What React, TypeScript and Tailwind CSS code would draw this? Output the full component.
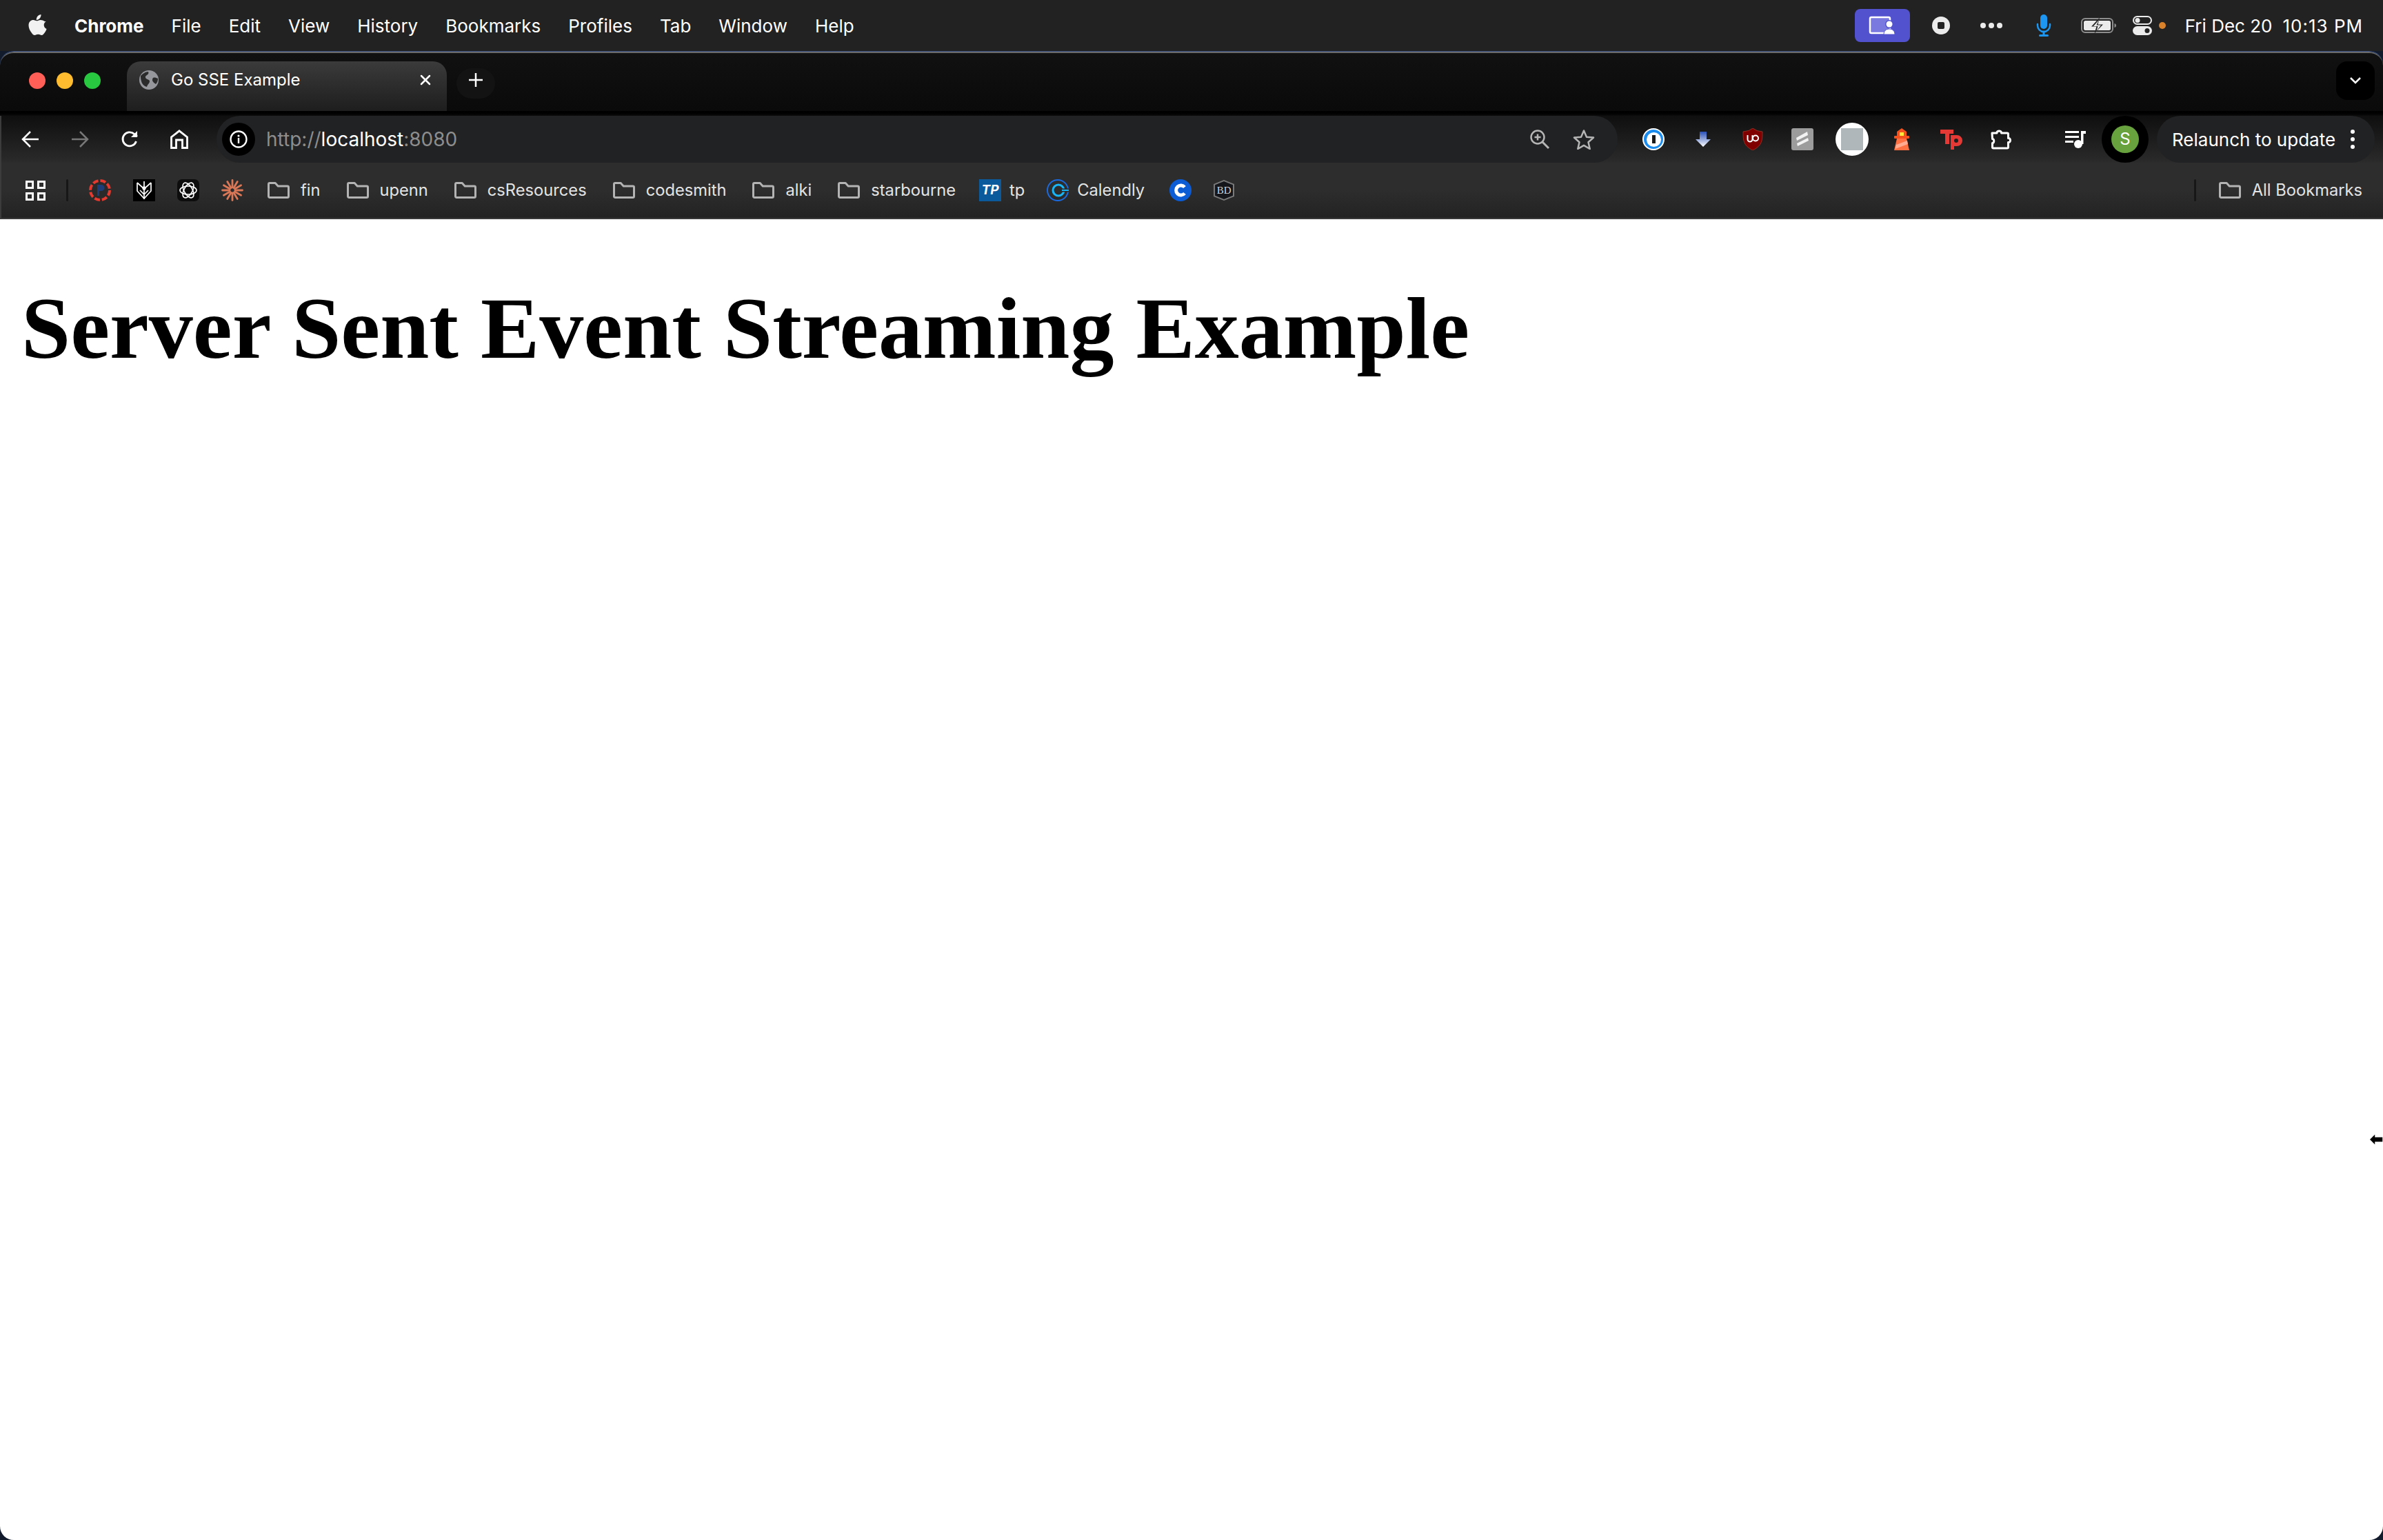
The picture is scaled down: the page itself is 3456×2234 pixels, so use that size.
const MENU_ITEMS = ["File", "Edit", "View", "History", "Bookmarks", "Profiles", "Tab", "Window", "Help"];
const BURST_ANGLES = [0, 30, 60, 90, 120, 150, 180, 210, 240, 270, 300, 330];

function Folder() {
  return (
    <svg width="32" height="24" viewBox="0 0 32 24" fill="none" className="shrink-0">
      <path d="M1.500 3C1.500 2 2.300 1.500 3.200 1.500h8l4 4.500h13.600c1 0 1.700.7 1.700 1.700v13c0 1-.7 1.800-1.700 1.800H3.200c-1 0-1.700-.8-1.700-1.800z" stroke="#b3b3b3" strokeWidth="3" strokeLinejoin="round" />
    </svg>
  );
}

function FolderMark({ label, className }: { label: string; className: string }) {
  return (
    <div className={`flex items-center gap-[16px] ${className}`}>
      <Folder />
      <span>{label}</span>
    </div>
  );
}

function MenuBar() {
  return (
    <div className="flex h-[74px] shrink-0 items-center bg-[#222222] pl-[40px] pr-[29px] text-[26px] text-white">
      <svg width="28" height="32" viewBox="0 0 28 32" fill="#f2f2f2" className="mb-[3px] shrink-0">
        <path d="M19.500 1c.2 2.300-.7 4.200-1.800 5.500-1.200 1.500-3.100 2.500-4.900 2.400-.3-2.100.7-4.200 1.800-5.500C15.800 2 17.900 1 19.500 1z" />
        <path d="M26.800 11.100c-1.900 1.200-3.100 3-3.100 5.200 0 2.600 1.500 4.700 3.900 5.700-.6 1.900-1.500 3.600-2.700 5.300-1.300 1.800-2.500 3.700-4.600 3.700-2 0-2.600-1.200-5-1.200-2.300 0-3.100 1.200-5 1.200s-3.300-1.700-4.700-3.800C3.400 24.700 1.500 20.400 1.500 16.700 1.500 11.600 5 9 8.300 9c2 0 3.700 1.300 5 1.300 1.200 0 3.100-1.400 5.400-1.400 2.300 0 4.500.9 6.100 2.200z" />
      </svg>
      <span className="ml-[40px] font-bold">Chrome</span>
      <div className="ml-[40px] flex gap-[40px]">
        {MENU_ITEMS.map((m) => (
          <span key={m}>{m}</span>
        ))}
      </div>
      <div className="ml-auto flex h-[48px] w-[80px] items-center justify-center rounded-[8px] bg-[#5251ce]">
        <svg width="40" height="28" viewBox="0 0 40 28">
          <rect x="2" y="2" width="29" height="23" rx="2" fill="#7a79e0" stroke="#ffffff" strokeWidth="2.500" />
          <circle cx="30" cy="12" r="6" fill="#5251ce" />
          <circle cx="30" cy="12" r="4.500" fill="#ffffff" />
          <path d="M22 27c0-5 3-8 8-8s8 3 8 8z" fill="#ffffff" stroke="#5251ce" strokeWidth="1" />
        </svg>
      </div>
      <div className="ml-[32px] flex size-[26px] items-center justify-center rounded-full bg-[#ebebeb]">
        <div className="size-[10px] rounded-[2px] bg-[#222222]" />
      </div>
      <div className="ml-[44px] flex w-[32px] justify-between">
        <div className="size-[8px] rounded-full bg-[#ebebeb]" />
        <div className="size-[8px] rounded-full bg-[#ebebeb]" />
        <div className="size-[8px] rounded-full bg-[#ebebeb]" />
      </div>
      <svg width="22" height="32" viewBox="0 0 22 32" className="ml-[49px]">
        <rect x="6" y="0" width="10" height="21" rx="5" fill="#1c96f0" />
        <path d="M2 14v2a9 9 0 0 0 18 0v-2" fill="none" stroke="#1c96f0" strokeWidth="2.500" strokeLinecap="round" />
        <path d="M11 25v4M5.500 30.500h11" stroke="#1c96f0" strokeWidth="3" strokeLinecap="round" />
      </svg>
      <svg width="52" height="24" viewBox="0 0 52 24" className="ml-[43px]">
        <rect x="1" y="2" width="45" height="20" rx="5" fill="none" stroke="#8e8e8e" strokeWidth="2" />
        <rect x="4" y="5" width="39" height="14" rx="2.500" fill="#ebebeb" />
        <path d="M48.500 9c2 .6 2.500 1.500 2.500 3s-.5 2.400-2.500 3z" fill="#8e8e8e" />
        <path d="M27 0.500 15 13.500h7.500L19.500 23.500 32 10.500h-7.500z" fill="#222222" />
        <path d="M26 4 18 13h6.500l-2 7L29 11.500h-6.500z" fill="#ebebeb" />
      </svg>
      <svg width="28" height="28" viewBox="0 0 28 28" className="ml-[23px]">
        <rect x="1" y="1" width="26" height="11" rx="5.500" fill="none" stroke="#ebebeb" strokeWidth="2" />
        <circle cx="7" cy="6.500" r="3.500" fill="#ebebeb" />
        <rect x="0" y="15" width="28" height="13" rx="6.500" fill="#ebebeb" />
        <circle cx="21" cy="21.500" r="3.500" fill="#222222" />
      </svg>
      <div className="ml-[10px] size-[10px] rounded-full bg-[#d9822b]" />
      <span className="ml-[28px] whitespace-pre">Fri Dec 20</span>
      <span className="ml-[15px] whitespace-pre tracking-[1px]">10:13 PM</span>
    </div>
  );
}

function TabStrip() {
  return (
    <div className="relative flex h-[86px] shrink-0 items-start rounded-t-[20px] border-t-2 border-[#6a6a6a] bg-gradient-to-b from-[#111111] to-[#0a0a0a] pl-[42px] pt-[12px]">
      <div className="mt-[16px] flex gap-[16px]">
        <div className="size-[24px] rounded-full bg-[#ff5f57]" />
        <div className="size-[24px] rounded-full bg-[#febc2e]" />
        <div className="size-[24px] rounded-full bg-[#28c840]" />
      </div>
      <div className="ml-[38px] flex h-[72px] w-[464px] items-start rounded-t-[20px] bg-gradient-to-b from-[#3b3b3b] to-[#1e1e1e] pl-[18px] pr-[22px] pt-[13px] text-[24px] leading-[28px] text-white">
        <svg width="28" height="28" viewBox="0 0 28 28" className="shrink-0">
          <circle cx="14" cy="14" r="14" fill="#95979c" />
          <path d="M2 8c3-3 7-6 11-6 1 2 0 4-2 5s-3 3-1 5 5 1 5 4-3 4-4 8c-4-1-7-4-8-8-1-3-1-6-1-8z" fill="#2b2b2b" />
          <path d="M20 11c2-1 5 0 7 1 0 3-1 6-3 8-2-1-4-3-5-5 0-2 0-3 1-4z" fill="#2b2b2b" />
        </svg>
        <span className="ml-[18px]">Go SSE Example</span>
        <svg width="18" height="18" viewBox="0 0 18 18" className="ml-auto mt-[5px]">
          <path d="M3 3l12 12M15 3 3 15" stroke="#ffffff" strokeWidth="2.500" strokeLinecap="round" />
        </svg>
      </div>
      <div className="ml-[14px] mt-[10px] flex h-[44px] w-[56px] items-start justify-center rounded-[22px] bg-[#131313] pt-[6px]">
        <svg width="22" height="22" viewBox="0 0 22 22">
          <path d="M11 1v20M1 11h20" stroke="#ffffff" strokeWidth="2.500" />
        </svg>
      </div>
      <div className="ml-auto mr-[12px] flex h-[56px] w-[56px] items-center justify-center rounded-[16px] bg-black">
        <svg width="20" height="14" viewBox="0 0 20 14">
          <path d="M3 3l7 7 7-7" fill="none" stroke="#ffffff" strokeWidth="2.500" />
        </svg>
      </div>
    </div>
  );
}

function NavIcon({ children }: { children: React.ReactNode }) {
  return <div className="flex h-[68px] w-[72px] shrink-0 items-center justify-center">{children}</div>;
}

function Toolbar() {
  return (
    <div className="flex h-[68px] shrink-0 items-center bg-gradient-to-b from-[#0f0f0f] to-[#2b2b2b] pl-[8px] pr-[12px] shadow-[inset_2px_0_0_#3c3c3c]">
      <NavIcon>
        <svg width="26" height="26" viewBox="0 0 26 26" fill="none" stroke="#ffffff" strokeWidth="2.500">
          <path d="M25 13H3M13 2 2 13l11 11" />
        </svg>
      </NavIcon>
      <NavIcon>
        <svg width="26" height="26" viewBox="0 0 26 26" fill="none" stroke="#777777" strokeWidth="2.500">
          <path d="M1 13h22M13 2l11 11-11 11" />
        </svg>
      </NavIcon>
      <NavIcon>
        <svg width="26" height="26" viewBox="0 0 26 26" fill="none" stroke="#ffffff" strokeWidth="2.800">
          <path d="M22.500 16a10 10 0 1 1-2.800-10.600L24 9" />
          <path d="M24 1v9h-9" strokeWidth="0" fill="#ffffff" />
        </svg>
      </NavIcon>
      <NavIcon>
        <svg width="26" height="28" viewBox="0 0 26 28" fill="none" stroke="#ffffff" strokeWidth="2.800">
          <path d="M1.500 26.500V11L13 1.800 24.500 11v15.500h-7V15h-9v11.500z" />
        </svg>
      </NavIcon>
      <div className="ml-[18px] flex h-[68px] w-[2032px] shrink-0 items-center rounded-full bg-[#212224] pl-[8px] pr-[33px] text-[28px]">
        <div className="flex size-[48px] items-center justify-center rounded-full bg-black">
          <svg width="26" height="26" viewBox="0 0 26 26">
            <circle cx="13" cy="13" r="11.500" fill="none" stroke="#ffffff" strokeWidth="2.300" />
            <circle cx="13" cy="8" r="1.600" fill="#ffffff" />
            <rect x="11.800" y="11" width="2.400" height="8" fill="#ffffff" />
          </svg>
        </div>
        <span className="ml-[16px]">
          <span className="text-[#8d8d8d]">http://</span>
          <span className="text-white">localhost</span>
          <span className="text-[#8d8d8d]">:8080</span>
        </span>
        <svg width="30" height="30" viewBox="0 0 30 30" fill="none" stroke="#b5b5b5" strokeWidth="2.500" className="ml-auto">
          <circle cx="12" cy="12" r="9.500" />
          <path d="M19 19l9 9" strokeWidth="3" />
          <path d="M12 7.500v9M7.500 12h9" />
        </svg>
        <svg width="32" height="30" viewBox="0 0 32 30" fill="none" stroke="#b5b5b5" strokeWidth="2.500" className="ml-[33px]">
          <path d="M16 2.500l4 9.200 10 .9-7.500 6.600 2.200 9.800L16 23.900 7.300 29l2.200-9.800L2 12.600l10-.9z" strokeLinejoin="round" />
        </svg>
      </div>
      <div className="ml-[16px] flex items-center">
        <NavIcon>
          <div className="flex size-[32px] items-center justify-center rounded-full border-[2px] border-white bg-[#1a8cf0]">
            <div className="flex size-[21px] items-center justify-center rounded-full bg-white">
              <div className="h-[12px] w-[5px] bg-[#1a1a1a]" />
            </div>
          </div>
        </NavIcon>
        <NavIcon>
          <svg width="22" height="24" viewBox="0 0 22 24">
            <defs>
              <linearGradient id="dlArrow" x1="0" y1="0" x2="0" y2="1">
                <stop offset="0" stopColor="#2a50b8" />
                <stop offset="1" stopColor="#ffffff" />
              </linearGradient>
            </defs>
            <path d="M6 1h10v11h6L11 23 0 12h6z" fill="url(#dlArrow)" />
          </svg>
        </NavIcon>
        <NavIcon>
          <svg width="30" height="32" viewBox="0 0 30 32">
            <path d="M15 0l6 3.500 8 1.500c0 12 0 20-14 27C1 25 1 17 1 5l8-1.500z" fill="#800000" stroke="#a33a2a" strokeWidth="0.800" />
            <path d="M7.500 10v6a3.500 3.500 0 0 0 7 0v-6" fill="none" stroke="#ffffff" strokeWidth="2" />
            <circle cx="19" cy="14.500" r="4" fill="none" stroke="#ffffff" strokeWidth="2" />
          </svg>
        </NavIcon>
        <NavIcon>
          <div className="flex size-[32px] items-center justify-center rounded-[3px] bg-[#9c9c9c]">
            <svg width="20" height="22" viewBox="0 0 20 22" fill="#f2f2f2">
              <path d="M1 10 17 1l1 5L2 14z" transform="translate(0 -1)" />
              <path d="M2 17 18 9l1 4L3 21z" />
            </svg>
          </div>
        </NavIcon>
        <NavIcon>
          <div className="flex size-[48px] items-center justify-center rounded-full bg-white">
            <div className="size-[32px] bg-[#b0b7ba]" />
          </div>
        </NavIcon>
        <NavIcon>
          <svg width="24" height="32" viewBox="0 0 24 32">
            <path d="M12 0l7 5v8H5V5z" fill="#f4511e" />
            <rect x="9" y="6" width="6" height="6" fill="#ffeb3b" />
            <rect x="1" y="11" width="22" height="4" rx="1" fill="#f4511e" />
            <path d="M5 15h14l4 17H1z" fill="#ff7043" />
            <path d="M4 24l16-6 1 5L2.500 30z" fill="#ffab91" />
          </svg>
        </NavIcon>
        <NavIcon>
          <svg width="32" height="30" viewBox="0 0 32 30" fill="#e53935">
            <path d="M0 1h19v6h-6v15H7V7H0z" />
            <path d="M15 9h9a8 8 0 0 1 0 16h-4v5h-5z" />
            <circle cx="23" cy="17" r="3" fill="#1f1f1f" />
          </svg>
        </NavIcon>
        <NavIcon>
          <svg width="32" height="32" viewBox="0 0 32 32" fill="none" stroke="#ffffff" strokeWidth="3" strokeLinejoin="round">
            <path d="M3 7h7c-.5-4 7-4 6.500 0H25c1 0 1.500.5 1.500 1.500v6c4-.5 4 6.500 0 6v7c0 1-.5 1.500-1.500 1.500H5c-1 0-1.500-.5-1.500-1.500v-6c3 .5 3-6.500 0-6z" />
          </svg>
        </NavIcon>
        <div className="ml-[36px]">
          <NavIcon>
            <svg width="30" height="26" viewBox="0 0 30 26" fill="#ffffff">
              <rect x="0" y="1" width="20" height="3" />
              <rect x="0" y="8" width="20" height="3" />
              <rect x="0" y="15" width="12" height="3" />
              <path d="M23 1h7v4h-3.500v15h-3.500z" />
              <circle cx="19" cy="20" r="6" />
            </svg>
          </NavIcon>
        </div>
        <div className="ml-[2px] flex size-[68px] items-center justify-center rounded-full bg-black">
          <div className="flex size-[40px] items-center justify-center rounded-full bg-[#68a23f] text-[24px] text-white">S</div>
        </div>
        <div className="ml-[12px] flex h-[68px] w-[316px] items-center rounded-full bg-[#212224] pl-[22px] text-[26px] text-white">
          <span>Relaunch to update</span>
          <div className="ml-auto mr-[29px] flex flex-col gap-[5px]">
            <div className="size-[6px] rounded-full bg-white" />
            <div className="size-[6px] rounded-full bg-white" />
            <div className="size-[6px] rounded-full bg-white" />
          </div>
        </div>
      </div>
    </div>
  );
}

function BookmarksBar() {
  return (
    <div className="flex h-[82px] shrink-0 items-center border-b-2 border-[#3a3a3a] bg-gradient-to-b from-[#2d2d2d] via-[#2d2d2d] to-[#232323] text-[23.700px] text-[#e3e3e3] shadow-[inset_2px_0_0_#3c3c3c]">
      <div className="ml-[37px] grid size-[29px] shrink-0 grid-cols-2 gap-[5px]">
        <div className="border-[3px] border-white" />
        <div className="border-[3px] border-white" />
        <div className="border-[3px] border-white" />
        <div className="border-[3px] border-white" />
      </div>
      <div className="ml-[30px] h-[32px] w-[3px] rounded-full bg-[#171717]" />
      <svg width="32" height="32" viewBox="0 0 32 32" className="ml-[30px] shrink-0">
        <circle cx="16" cy="16" r="14" fill="#2a2a2a" stroke="#e53a2f" strokeWidth="4" strokeDasharray="8 3" />
        <path d="M12 8h6a4 4 0 0 1 0 9h-3v7h-3z" fill="#1c3d78" />
      </svg>
      <div className="ml-[32px] flex size-[32px] shrink-0 items-center justify-center bg-black">
        <svg width="26" height="28" viewBox="0 0 26 28" fill="none" stroke="#ffffff" strokeWidth="1.700">
          <path d="M13 1v26M3 3l10 9 10-9M3 3v12l10 11 10-11V3M7 14l6 6 6-6" />
          <circle cx="13" cy="11" r="1.800" fill="#ffffff" />
        </svg>
      </div>
      <div className="ml-[32px] flex size-[32px] shrink-0 items-center justify-center rounded-[7px] bg-[#0d0d0d]">
        <svg width="28" height="28" viewBox="0 0 28 28" fill="none" stroke="#ffffff" strokeWidth="1.600">
          <ellipse cx="14" cy="14" rx="12" ry="6" />
          <ellipse cx="14" cy="14" rx="12" ry="6" transform="rotate(60 14 14)" />
          <ellipse cx="14" cy="14" rx="12" ry="6" transform="rotate(120 14 14)" />
        </svg>
      </div>
      <svg width="32" height="32" viewBox="0 0 32 32" className="ml-[32px] shrink-0" stroke="#d97757" strokeWidth="2.800" strokeLinecap="round">
        {BURST_ANGLES.map((a) => (
          <path key={a} d="M16 12V1.500" transform={`rotate(${a} 16 16)`} />
        ))}
      </svg>
      <FolderMark label="fin" className="ml-[35px]" />
      <FolderMark label="upenn" className="ml-[38px]" />
      <FolderMark label="csResources" className="ml-[38px]" />
      <FolderMark label="codesmith" className="ml-[38px]" />
      <FolderMark label="alki" className="ml-[38px]" />
      <FolderMark label="starbourne" className="ml-[38px]" />
      <div className="ml-[34px] flex items-center gap-[12px]">
        <div className="flex size-[32px] shrink-0 items-center justify-center bg-[#0a5a9c] text-[19px] font-bold italic leading-none text-white">TP</div>
        <span>tp</span>
      </div>
      <div className="ml-[32px] flex items-center gap-[12px]">
        <svg width="32" height="32" viewBox="0 0 32 32" fill="none" className="shrink-0">
          <circle cx="16" cy="16" r="15" stroke="#1a6ae0" strokeWidth="2" />
          <circle cx="17" cy="16" r="8" stroke="#18b4f5" strokeWidth="3" />
          <path d="M20 16h12" stroke="#2b2b2b" strokeWidth="5" />
          <path d="M22 16h10" stroke="#18b4f5" strokeWidth="2" />
        </svg>
        <span>Calendly</span>
      </div>
      <div className="ml-[36px] flex size-[32px] shrink-0 items-center justify-center rounded-full bg-[#0b5cd5]">
        <svg width="20" height="20" viewBox="0 0 20 20" fill="none">
          <path d="M16 5.500a7 7 0 1 0 0 9" stroke="#ffffff" strokeWidth="5" />
        </svg>
      </div>
      <div className="ml-[32px] flex h-[30px] w-[30px] shrink-0 items-center justify-center bg-[#7a7a7a] [clip-path:polygon(50%_0,100%_20%,100%_80%,50%_100%,0_80%,0_20%)]">
        <div className="flex h-[26px] w-[26px] items-center justify-center bg-[#14161c] text-[15px] leading-none text-[#d0d0d0] [clip-path:polygon(50%_0,100%_20%,100%_80%,50%_100%,0_80%,0_20%)] [font-family:'Liberation_Serif',serif]">
          BD
        </div>
      </div>
      <div className="ml-auto h-[32px] w-[3px] rounded-full bg-[#171717]" />
      <div className="ml-[33px] mr-[30px] flex items-center gap-[16px]">
        <Folder />
        <span>All Bookmarks</span>
      </div>
    </div>
  );
}

export default function App() {
  return (
    <div className="relative flex h-[2234px] w-[3456px] flex-col overflow-hidden bg-[#121b2c] [font-family:Inter,'Noto_Sans',sans-serif]">
      <MenuBar />
      <div className="flex flex-1 flex-col overflow-hidden rounded-[20px] border-t border-[#3d5488]">
        <TabStrip />
        <div className="h-[7px] shrink-0 bg-gradient-to-b from-black to-[#0d0d0d]" />
        <Toolbar />
        <BookmarksBar />
        <div className="flex-1 bg-white pl-[31px] pr-[32px]">
          <h1 className="mt-[85px] text-[128px] font-bold leading-[147px] text-black [font-family:'Liberation_Serif','Times_New_Roman',serif]">
            Server Sent Event Streaming Example
          </h1>
        </div>
      </div>
      {/* resize cursor sitting on the right edge */}
      <svg width="21" height="20" viewBox="0 0 21 20" className="absolute left-[3435px] top-[1643px]">
        <path d="M1 10l9-9v5h11v8H10v5z" fill="#000000" stroke="#ffffff" strokeWidth="1.500" />
      </svg>
    </div>
  );
}
